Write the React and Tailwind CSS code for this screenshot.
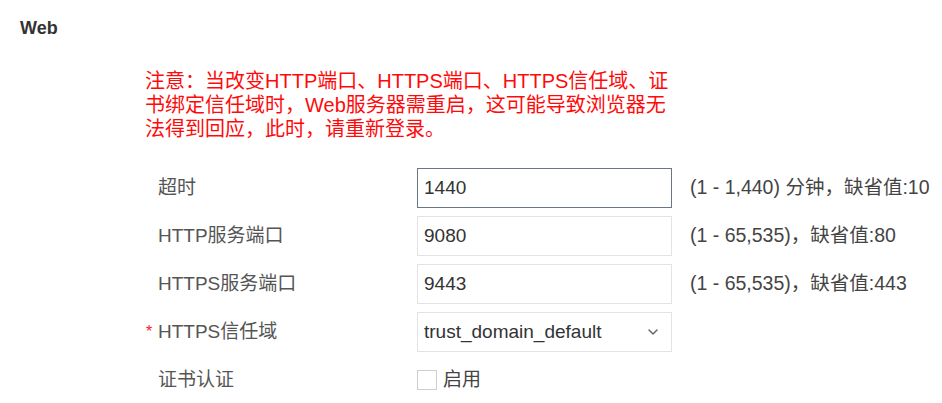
import { ChevronDown } from "lucide-react";

const font = { fontFamily: '"Liberation Sans", "Noto Sans CJK SC", sans-serif' };

function Row({ label, required, children, help }) {
  return (
    <div className="flex h-[40px] items-center">
      <div className="w-[146px] shrink-0" />
      <span className="w-[12px] shrink-0 text-[16px] text-[#f5222d]">{required ? "*" : ""}</span>
      <div className="w-[259px] shrink-0 text-[19px] text-[#555]">{label}</div>
      {children}
      {help && <div className="ml-[18px] whitespace-nowrap text-[19.5px] text-[#444]">{help}</div>}
    </div>
  );
}

function TextInput({ value, focused }) {
  return (
    <div
      className={
        "flex h-[40px] w-[255px] shrink-0 items-center border bg-white px-[6px] text-[19px] text-[#333] " +
        (focused ? "border-[#6b7685]" : "border-[#e3e3e3]")
      }
    >
      {value}
    </div>
  );
}

export default function App() {
  return (
    <div className="h-[403px] w-[942px] overflow-hidden bg-white" style={font}>
      <div className="pl-[20px] pt-[17px] text-[18px] font-bold leading-[22px] text-[#333]">Web</div>

      <div className="mt-[30px] pl-[145px] text-[20px] leading-[24px] text-[#ff0a0a]">
        <div className="whitespace-nowrap">注意：当改变HTTP端口、HTTPS端口、HTTPS信任域、证</div>
        <div className="whitespace-nowrap">书绑定信任域时，Web服务器需重启，这可能导致浏览器无</div>
        <div className="whitespace-nowrap">法得到回应，此时，请重新登录。</div>
      </div>

      <div className="mt-[27px] flex flex-col gap-[8px]">
        <Row label="超时" help="(1 - 1,440) 分钟，缺省值:10">
          <TextInput value="1440" focused />
        </Row>
        <Row label="HTTP服务端口" help="(1 - 65,535)，缺省值:80">
          <TextInput value="9080" />
        </Row>
        <Row label="HTTPS服务端口" help="(1 - 65,535)，缺省值:443">
          <TextInput value="9443" />
        </Row>
        <Row label="HTTPS信任域" required>
          <div className="flex h-[40px] w-[255px] shrink-0 items-center justify-between border border-[#e3e3e3] bg-white pl-[6px] pr-[10px] text-[19px] text-[#333]">
            <span>trust_domain_default</span>
            <ChevronDown size={16} strokeWidth={2.2} color="#666" />
          </div>
        </Row>
        <Row label="证书认证">
          <label className="flex items-center gap-[6px] text-[19px] text-[#444]">
            <span className="block h-[20px] w-[20px] border border-[#cfcfcf] bg-white" />
            <span>启用</span>
          </label>
        </Row>
      </div>
    </div>
  );
}
